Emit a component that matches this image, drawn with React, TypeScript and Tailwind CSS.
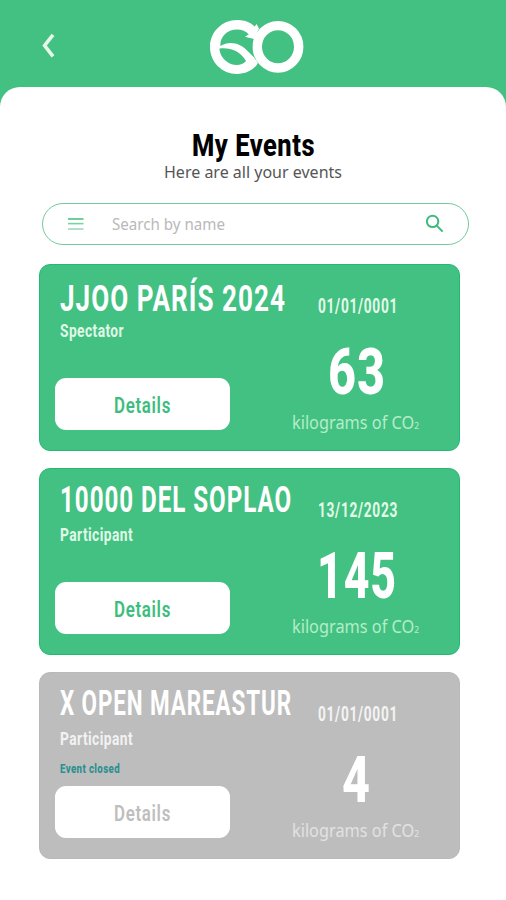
import { ReactNode, useLayoutEffect, useRef, useState } from 'react';
import clsx from 'clsx';

interface EventItem {
  id: number;
  title: string;
  titleWidth: number;
  titleClass: string;
  role: string;
  roleWidth: number;
  date: string;
  kilograms: number;
  kilogramsWidth: number;
  closed?: boolean;
}

const events: EventItem[] = [
  {
    id: 1,
    title: 'JJOO PARÍS 2024',
    titleWidth: 226,
    titleClass: '-mb-px text-[37.5px] leading-[44px]',
    role: 'Spectator',
    roleWidth: 64,
    date: '01/01/0001',
    kilograms: 63,
    kilogramsWidth: 58,
  },
  {
    id: 2,
    title: '10000 DEL SOPLAO',
    titleWidth: 232,
    titleClass: 'mb-[3px] text-[36px] leading-[40px]',
    role: 'Participant',
    roleWidth: 73,
    date: '13/12/2023',
    kilograms: 145,
    kilogramsWidth: 80,
  },
  {
    id: 3,
    title: 'X OPEN MAREASTUR',
    titleWidth: 232,
    titleClass: 'mb-1 text-[35px] leading-[39px]',
    role: 'Participant',
    roleWidth: 73,
    date: '01/01/0001',
    kilograms: 4,
    kilogramsWidth: 29,
    closed: true,
  },
];

interface FitTextProps {
  children: ReactNode;
  width: number;
  className?: string;
}

// Condenses a single line of text to the given width
const FitText = ({ children, width, className }: FitTextProps) => {
  const ref = useRef<HTMLSpanElement>(null);
  const [scale, setScale] = useState(1);

  useLayoutEffect(() => {
    if (ref.current) {
      setScale(width / ref.current.getBoundingClientRect().width);
    }
  }, []);

  return (
    <span className={clsx('block whitespace-nowrap', className)} style={{ width }}>
      <span ref={ref} className="inline-block origin-left" style={{ transform: `scaleX(${scale})` }}>
        {children}
      </span>
    </span>
  );
};

const Logo = () => (
  <svg width="96" height="56" viewBox="209 19 96 56" fill="#fff">
    <ellipse cx="278" cy="46.8" rx="20.7" ry="21.2" fill="none" stroke="#fff" strokeWidth="9.4" />
    <path
      d="M259 28.5 L256.6 24 L254.8 26.5 C250 22 244 20 237 20 C222 20 210 32 210 47 C210 62 222 74 237 74 C246 74 254 70 258 63 C255 58 251 54 247 50.5 C240 43 229 40.5 220.5 46 C219.5 38 226 29.5 237 29.5 C242 29.5 246 31 248.8 34.5 L245 36.8 L254 39 Z M219.5 48.5 C231 47.5 240 51 246 61 C242 66 232 66.5 226 61 C222 57.5 219.5 53 219.5 48.5 Z"
      fillRule="evenodd"
    />
  </svg>
);

const Header = () => (
  <header className="flex h-[87px] items-start pl-[41px] pt-[19px]">
    <button className="mt-3.5 w-[168px]" aria-label="Back">
      <svg width="14" height="26" viewBox="0 0 14 26" fill="none" stroke="#e6f8ea" strokeWidth="3.6">
        <path d="M12 1.8 L3.6 12.5 L12 23.4" />
      </svg>
    </button>
    <Logo />
  </header>
);

const SearchBar = () => (
  <div className="ml-[42px] mt-[21px] flex h-[42px] w-[427px] items-center rounded-full border-[1.5px] border-[#72cb9a] pl-[25px]">
    <svg width="16" height="14" viewBox="0 0 16 14" strokeWidth="1.6">
      <path d="M0 2 H15.5" stroke="#4fc088" />
      <path d="M0 6.6 H15.5" stroke="#7bd0a4" />
      <path d="M0 12 H15.5" stroke="#9bdcbb" />
    </svg>
    <FitText width={113} className="ml-[28px] text-[16.5px] leading-5 text-[#b9b9b9]">
      Search by name
    </FitText>
    <svg className="-mt-0.5 ml-[200px]" width="19" height="19" viewBox="0 0 19 19" fill="none" stroke="#3fba7d">
      <circle cx="7.6" cy="7.4" r="5.7" strokeWidth="2" />
      <path d="M11.8 11.6 L17.6 17.6" strokeWidth="2" />
    </svg>
  </div>
);

const EventCard = ({ event }: { event: EventItem }) => (
  <article
    className={clsx(
      'flex h-[187px] w-[421px] rounded-[11px] border',
      event.closed ? 'border-[#b9b9b9] bg-[#bdbdbd]' : 'border-[#22ba72] bg-[#43c182]'
    )}
  >
    <div className="flex w-[251px] flex-col pb-5 pl-[15px]">
      <h2 className="ml-[5px] flow-root pt-[11px] font-[Roboto] font-bold text-white">
        <FitText width={event.titleWidth} className={clsx('tracking-[0.04em]', event.titleClass)}>
          {event.title}
        </FitText>
      </h2>
      <FitText
        width={event.roleWidth}
        className={clsx(
          'ml-[5px] font-[Roboto] text-[18.5px] font-bold leading-6 tracking-[0.03em]',
          event.closed ? 'text-[#f2f2f2]' : 'text-[#e0f8e7]'
        )}
      >
        {event.role}
      </FitText>
      {event.closed && (
        <FitText
          width={60}
          className="ml-[5px] mt-2.5 font-[Roboto] text-[13px] font-extrabold leading-4 tracking-[0.04em] text-[#2b9090]"
        >
          Event closed
        </FitText>
      )}
      <button
        className={clsx(
          'mt-auto flex h-[52px] w-[175px] items-center justify-center rounded-[11px] bg-white pt-0.5 font-[Roboto] text-[22px] font-semibold tracking-[0.04em]',
          event.closed ? 'text-[#bebebe]' : 'text-[#3dbd7d]'
        )}
      >
        <FitText width={57}>Details</FitText>
      </button>
    </div>
    <div className="flex w-[131px] flex-col items-center">
      <FitText
        width={80}
        className={clsx(
          'ml-0.5 mt-[30px] font-[Roboto] text-[19.5px] font-bold leading-6 tracking-[0.05em]',
          event.closed ? 'text-[#f4f4f4]' : 'text-[#e4fae9]'
        )}
      >
        {event.date}
      </FitText>
      <FitText
        width={event.kilogramsWidth}
        className="mt-5 font-[Roboto] text-[65px] font-extrabold leading-[66px] tracking-[0.02em] text-white"
      >
        {event.kilograms}
      </FitText>
      <FitText
        width={127}
        className={clsx('-ml-0.5 mt-[5px] text-[17.5px] leading-6', event.closed ? 'text-[#e2e2e2]' : 'text-[#b5edc8]')}
      >
        kilograms of CO<span className="text-[9px] font-medium leading-none">2</span>
      </FitText>
    </div>
  </article>
);

const App = () => {
  return (
    <div className="flex min-h-screen w-[506px] flex-col bg-[#43c182] font-['Noto_Sans',sans-serif]">
      <Header />
      <main className="flex-1 rounded-t-[20px] bg-white pt-[43px]">
        {/* Page heading */}
        <div className="flex flex-col items-center">
          <h1 className="font-[Roboto] text-[31.5px] font-extrabold leading-8 tracking-[0.02em] text-black">
            <FitText width={123}>My Events</FitText>
          </h1>
          <FitText width={178} className="text-[16.5px] leading-5 text-[#555]">
            Here are all your events
          </FitText>
        </div>

        <SearchBar />

        {/* Event list */}
        <div className="ml-[39px] mt-[19px] flex flex-col gap-[17px]">
          {events.map((event) => (
            <EventCard key={event.id} event={event} />
          ))}
        </div>
      </main>
    </div>
  );
};

export default App;
